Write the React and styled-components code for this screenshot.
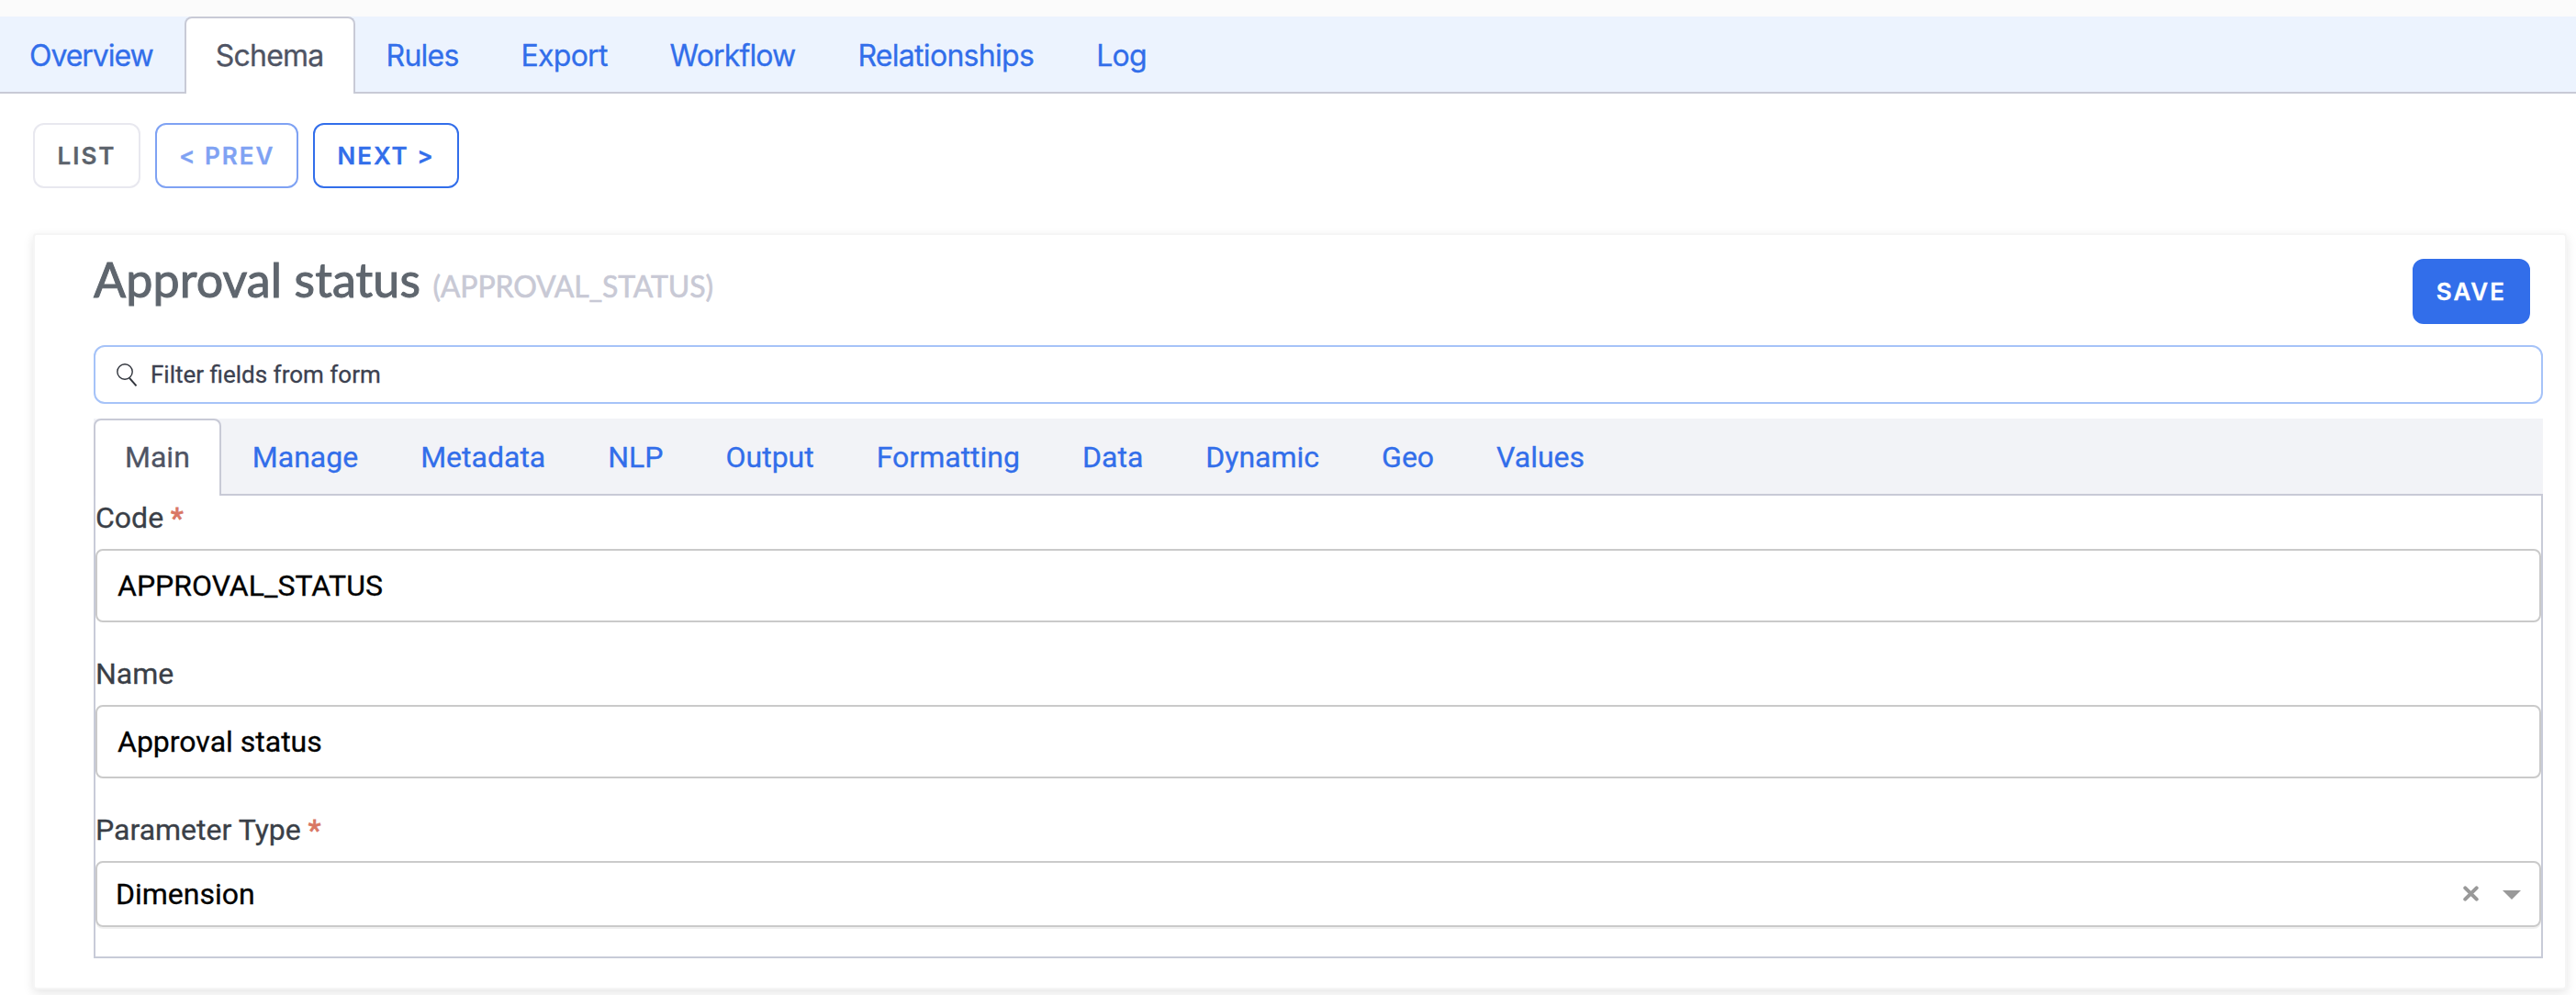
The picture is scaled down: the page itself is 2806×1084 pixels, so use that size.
import React from "react";
import styled, { createGlobalStyle, css } from "styled-components";

const Global = createGlobalStyle`
  *, *::before, *::after { box-sizing: border-box; }
  html { background: #fff; }
  body { margin: 0; background: #fff; font-family: Roboto, "Liberation Sans", sans-serif; }
  #root { height: 1084px; overflow: hidden; }
`;

const Page = styled.div`
  display: flex;
  flex-direction: column;
  padding-top: 18px;
  background: linear-gradient(#fbfbfb 18px, #fff 18px);
  -webkit-text-stroke: 0.3px;
`;

const NavBar = styled.nav`
  display: flex;
  height: 84px;
  background: #ecf3fe;
  box-shadow: inset 0 -2px 0 #c8cad6;
  font: 400 32px/82px Inter, "Liberation Sans", sans-serif;
`;

const FormTabs = styled(NavBar)`
  margin-top: 16px;
  background: #f2f3f7;
  font: 400 32px/80px Roboto, "Liberation Sans", sans-serif;
`;

const Tab = styled.a`
  height: 84px;
  padding: 0 32px;
  border: 2px solid transparent;
  border-bottom: 0;
  border-radius: 8px 8px 0 0;
  margin-left: ${(p) => p.$shift || 0}px;
  letter-spacing: ${(p) => p.$track || 0}px;
  color: #326eea;
  white-space: nowrap;
  ${(p) => p.$active && css`
    color: #4f5464;
    background: #fff;
    border-color: #c8cad6;
  `}
`;

const Toolbar = styled.div`
  display: flex;
  gap: 16px;
  padding: 32px 36px 0;
`;

const tones = {
  plain: css`color: #5c636c; border-color: #e8e8ef;`,
  faded: css`color: #7fa2f3; border-color: #7fa2f3;`,
  outline: css`color: #326eea; border-color: #326eea;`,
  solid: css`color: #fff; background: #326eea; border-color: #326eea;`,
};

const Button = styled.button`
  height: 71px;
  min-width: 117px;
  padding: 0 24px;
  border: 2px solid;
  border-radius: 12px;
  background: #fff;
  font: 600 26px/1 Inter, "Liberation Sans", sans-serif;
  letter-spacing: 2px;
  white-space: nowrap;
  ${(p) => tones[p.$tone]}
`;

const Card = styled.section`
  margin: 49px 10px 0 36px;
  height: 824px;
  padding: 0 24px 0 64px;
  border: 2px solid #f5f5f5;
  border-radius: 4px;
  background: #fff;
  box-shadow: 0 4px 12px rgba(0, 0, 0, 0.1);
`;

const CardHeader = styled.header`
  display: flex;
  justify-content: space-between;
  align-items: flex-start;
  height: 120px;
  padding: 26px 14px 0 0;
`;

const Title = styled.h1`
  margin: -10px 0 0;
  font: 400 52px/64px Lato, "Liberation Sans", sans-serif;
  letter-spacing: 0.1px;
  -webkit-text-stroke: 1px;
  color: #5f666e;
  white-space: nowrap;
  small {
    font-size: 32px;
    letter-spacing: -0.15px;
    -webkit-text-stroke: 0.6px;
    color: #c8c9d5;
  }
`;

const Filter = styled.label`
  display: flex;
  align-items: center;
  gap: 14px;
  height: 64px;
  padding: 0 23px;
  border: 2px solid #a6c3f8;
  border-radius: 12px;
  font-size: 26px;
  color: #3c4150;
`;

const Panel = styled.div`
  height: 504px;
  border: 2px solid #c8cbd8;
  border-top: 0;
`;

const Field = styled.div`
  display: flex;
  flex-direction: column;
  margin-bottom: 32px;
`;

const Label = styled.label`
  height: 58px;
  padding-top: 2px;
  font-size: 32px;
  line-height: 44px;
  color: #3a3f47;
  span { color: #d97764; -webkit-text-stroke: 0.8px; }
`;

const TextBox = styled.div`
  display: flex;
  align-items: center;
  height: 80px;
  padding: 0 22px;
  border: 2px solid #cacaca;
  border-radius: 8px;
  font-size: 32px;
  color: #000;
`;

const Select = styled(TextBox)`
  height: 72px;
  padding: 0 20px 1px;
  box-shadow: 0 2px 0 rgba(0, 0, 0, 0.06);
  span { flex: 1; }
`;

const Clear = styled.svg`
  width: 17px;
  height: 17px;
  margin-right: 26px;
`;

const Caret = styled.svg`
  width: 20px;
  height: 10px;
  margin-top: 3px;
`;

const NAV = [
  { label: "Overview", track: -1.05 },
  { label: "Schema", track: -0.75 },
  { label: "Rules", track: -0.75 },
  { label: "Export", track: -0.75 },
  { label: "Workflow", track: -0.85 },
  { label: "Relationships", track: -0.7 },
  { label: "Log", track: -0.7 },
];
const TABS = ["Main", "Manage", "Metadata", "NLP", "Output", "Formatting", "Data", "Dynamic", "Geo", "Values"];

export default function App() {
  return (
    <Page>
      <Global />
      <NavBar>
        {NAV.map(({ label, track }, i) => (
          <Tab key={label} $active={label === "Schema"} $shift={i === 0 ? -2 : 0} $track={track}>{label}</Tab>
        ))}
      </NavBar>
      <Toolbar>
        <Button $tone="plain">LIST</Button>
        <Button $tone="faded">&lt; PREV</Button>
        <Button $tone="outline">NEXT &gt;</Button>
      </Toolbar>
      <Card>
        <CardHeader>
          <Title>Approval status <small>(APPROVAL_STATUS)</small></Title>
          <Button $tone="solid">SAVE</Button>
        </CardHeader>
        <Filter>
          <svg width="23" height="25" viewBox="0 0 23 25" fill="none" stroke="#30343c" strokeWidth="1.4">
            <circle cx="9" cy="9" r="8.2" />
            <path d="M14 15.8 L21.5 24.3" strokeWidth="2" />
          </svg>
          Filter fields from form
        </Filter>
        <FormTabs>
          {TABS.map((t) => (
            <Tab key={t} $active={t === "Main"}>{t}</Tab>
          ))}
        </FormTabs>
        <Panel>
          <Field>
            <Label>Code <span>*</span></Label>
            <TextBox>APPROVAL_STATUS</TextBox>
          </Field>
          <Field>
            <Label>Name</Label>
            <TextBox>Approval status</TextBox>
          </Field>
          <Field>
            <Label>Parameter Type <span>*</span></Label>
            <Select>
              <span>Dimension</span>
              <Clear viewBox="0 0 17 17" stroke="#999" strokeWidth="4" strokeLinecap="round">
                <path d="M2.3 2.3 L14.7 14.7 M14.7 2.3 L2.3 14.7" />
              </Clear>
              <Caret viewBox="0 0 20 10" fill="#999"><path d="M0 0H20L10 10Z" /></Caret>
            </Select>
          </Field>
        </Panel>
      </Card>
    </Page>
  );
}
